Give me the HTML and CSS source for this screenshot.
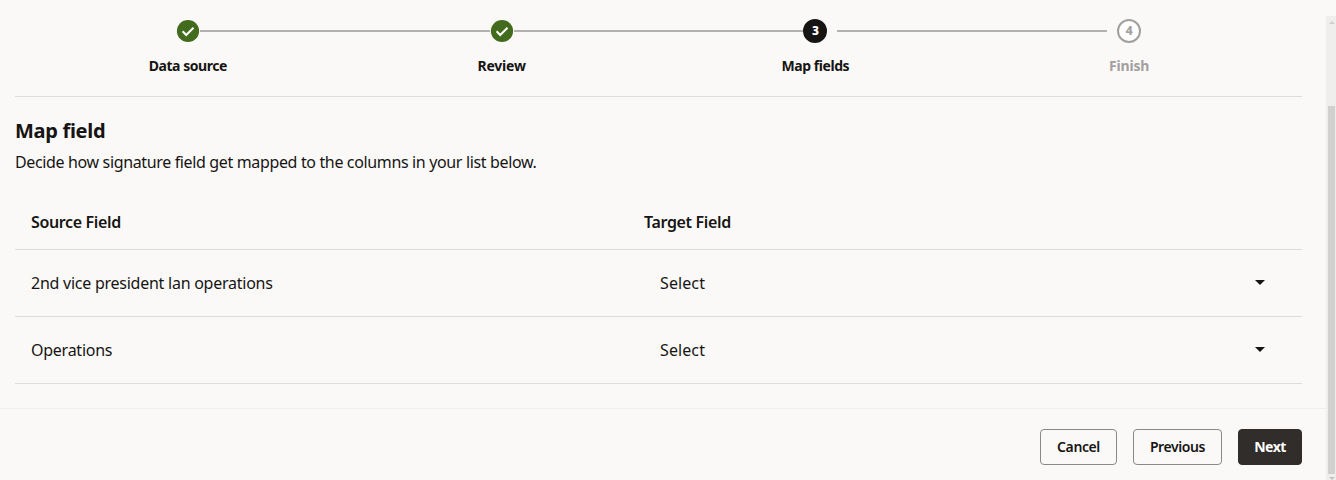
FILE: index.html
```html
<!DOCTYPE html>
<html lang="en">
<head>
  <meta charset="UTF-8">
  <title>Map fields</title>
  <link rel="stylesheet" href="styles.css">
</head>
<body>
  <div class="page">
    <div class="content">
      <ol class="train">
        <li class="step">
          <div class="track">
            <span class="line hidden"></span>
            <svg class="done" width="24" height="24" viewBox="0 0 24 24">
              <circle cx="12" cy="12" r="11.1" fill="#436b1d"/>
              <path d="M6.6 12.2l3.6 3.8 7.3-7.3" fill="none" stroke="#fff" stroke-width="2"/>
            </svg>
            <span class="line"></span>
          </div>
          <span class="step-label">Data source</span>
        </li>
        <li class="step">
          <div class="track">
            <span class="line"></span>
            <svg class="done" width="24" height="24" viewBox="0 0 24 24">
              <circle cx="12" cy="12" r="11.1" fill="#436b1d"/>
              <path d="M6.6 12.2l3.6 3.8 7.3-7.3" fill="none" stroke="#fff" stroke-width="2"/>
            </svg>
            <span class="line"></span>
          </div>
          <span class="step-label short">Review</span>
        </li>
        <li class="step">
          <div class="track">
            <span class="line"></span>
            <span class="circle current">3</span>
            <span class="line gap-left"></span>
          </div>
          <span class="step-label">Map fields</span>
        </li>
        <li class="step disabled">
          <div class="track">
            <span class="line gap-right"></span>
            <span class="circle">4</span>
            <span class="line hidden"></span>
          </div>
          <span class="step-label short">Finish</span>
        </li>
      </ol>

      <div class="body">
        <h1>Map field</h1>
        <p class="hint">Decide how signature field get mapped to the columns in your list below.</p>

        <div class="table">
          <div class="row head">
            <span class="source">Source Field</span>
            <span class="target">Target Field</span>
          </div>
          <div class="row">
            <span class="source">2nd vice president lan operations</span>
            <div class="select">
              <span>Select</span>
              <svg width="10" height="5" viewBox="0 0 10 5"><path d="M0 0h10L5 5z" fill="#161513"/></svg>
            </div>
          </div>
          <div class="row">
            <span class="source">Operations</span>
            <div class="select">
              <span>Select</span>
              <svg width="10" height="5" viewBox="0 0 10 5"><path d="M0 0h10L5 5z" fill="#161513"/></svg>
            </div>
          </div>
        </div>
      </div>

      <div class="footer">
        <button class="btn cancel">Cancel</button>
        <button class="btn previous">Previous</button>
        <button class="btn primary">Next</button>
      </div>
    </div>

    <div class="scrollbar">
      <svg class="arrow" width="6" height="3" viewBox="0 0 6 3"><path d="M0 3h6L3 0z" fill="#d0cfcd"/></svg>
      <div class="thumb"></div>
      <svg class="arrow" width="6" height="3" viewBox="0 0 6 3"><path d="M0 0h6L3 3z" fill="#c4c3c1"/></svg>
    </div>
  </div>
</body>
</html>
```
FILE: styles.css
```css
* {
  box-sizing: border-box;
}

body {
  margin: 0;
  background: #fbf9f8;
  color: #161513;
  font-family: "Noto Sans", sans-serif;
  font-size: 16px;
  overflow: hidden;
}

.page {
  display: flex;
  height: 480px;
}

.content {
  flex: 1;
  display: flex;
  flex-direction: column;
}

/* train */
.train {
  display: flex;
  list-style: none;
  height: 97px;
  margin: 0 24px 0 15px;
  padding: 19px 16px 0;
  border-bottom: 1px solid #dfdddb;
}

.step {
  flex: 1;
  text-align: center;
}

.track {
  display: flex;
  align-items: center;
  height: 24px;
}

.done {
  flex: none;
}

.line {
  flex: none;
  width: calc(50% - 12px);
  height: 2px;
  background: #b3b1ae;
}

.hidden {
  visibility: hidden;
}

.gap-left {
  width: calc(50% - 22px);
  margin-left: 10px;
}

.gap-right {
  width: calc(50% - 22px);
  margin-right: 10px;
}

.circle {
  flex: 0 0 24px;
  height: 24px;
  border: 2px solid #a2a09f;
  border-radius: 50%;
  background: #fff;
  font-size: 12px;
  font-weight: 800;
  line-height: 20px;
}

.circle.current {
  background: #161513;
  border-color: #161513;
  color: #fff;
}

.step-label {
  display: block;
  margin-top: 13px;
  font-size: 14px;
  font-weight: 700;
  line-height: 20px;
  letter-spacing: -0.45px;
}

.step-label.short {
  letter-spacing: -0.2px;
}

.disabled {
  color: #a2a09f;
}

/* mapping table */
.body {
  height: 311px;
  padding: 20px 24px 0 15px;
}

h1 {
  margin: 0;
  font-size: 20px;
  font-weight: 700;
  line-height: 28px;
  letter-spacing: -0.3px;
}

.hint {
  margin: 5px 0 0;
  line-height: 24px;
  letter-spacing: -0.355px;
}

.table {
  margin-top: 22px;
}

.row {
  display: flex;
  align-items: center;
  height: 67px;
  padding-left: 16px;
  border-bottom: 1px solid #dfdddb;
  letter-spacing: -0.25px;
}

.row.head {
  height: 54px;
  padding-bottom: 2px;
  font-weight: 600;
  letter-spacing: -0.35px;
}

.source {
  width: 613px;
}

.select {
  flex: 1;
  display: flex;
  align-items: center;
  justify-content: space-between;
  padding: 0 37px 0 16px;
  letter-spacing: 0.1px;
}

.select svg {
  margin-bottom: 2px;
}

/* footer */
.footer {
  flex: 1;
  display: flex;
  justify-content: flex-end;
  gap: 16px;
  padding: 20px 24px 0 0;
  border-top: 1px solid #f0eeed;
}

.btn {
  width: 77px;
  height: 36px;
  padding: 0 0 2px;
  border: 1px solid #8b8987;
  border-radius: 4px;
  background: transparent;
  color: #161513;
  font-family: inherit;
  font-size: 14px;
  font-weight: 600;
  letter-spacing: -0.4px;
}

.btn.previous {
  width: 89px;
}

.btn.primary {
  width: 64px;
  background: #312d2a;
  border-color: #312d2a;
  color: #fff;
  font-weight: 700;
  letter-spacing: -0.5px;
}

/* scrollbar */
.scrollbar {
  display: flex;
  flex-direction: column;
  align-items: center;
  gap: 1px;
  width: 10px;
  margin-top: 16px;
  padding: 5px 1px 0 2px;
  background: #efeeec;
}

.scrollbar svg {
  flex: none;
}

.thumb {
  width: 7px;
  height: 368px;
  margin: 81px 0 2px;
  background: #d1d0ce;
  flex: none;
}
```
